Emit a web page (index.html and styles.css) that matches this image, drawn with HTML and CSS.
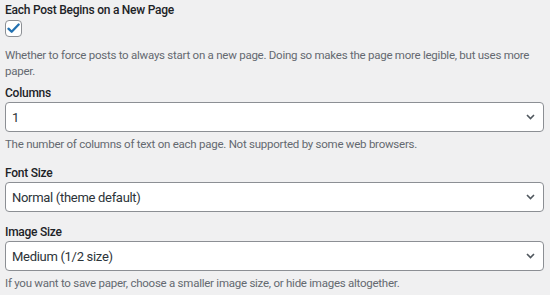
FILE: index.html
```html
<!DOCTYPE html>
<html>
<head>
<meta charset="utf-8">
<link rel="stylesheet" href="styles.css">
</head>
<body>
<div class="form">
  <div class="field first">
    <div class="label">Each Post Begins on a New Page</div>
    <div class="checkbox">
      <svg width="13" height="11" viewBox="0 0 14 12"><path d="M1.5 6.2 L5 9.6 L12.6 1.6" fill="none" stroke="#2271b1" stroke-width="2.5" stroke-linecap="round" stroke-linejoin="round"/></svg>
    </div>
    <p class="help">Whether to force posts to always start on a new page. Doing so makes the page more legible, but uses more paper.</p>
  </div>
  <div class="field with-help">
    <div class="label">Columns</div>
    <div class="select"><span>1</span><svg class="chev" width="9" height="6" viewBox="0 0 9 6"><path d="M1 1 L4.5 4.5 L8 1" fill="none" stroke="#50575e" stroke-width="1.6"/></svg></div>
    <p class="help">The number of columns of text on each page. Not supported by some web browsers.</p>
  </div>
  <div class="field">
    <div class="label">Font Size</div>
    <div class="select"><span>Normal (theme default)</span><svg class="chev" width="9" height="6" viewBox="0 0 9 6"><path d="M1 1 L4.5 4.5 L8 1" fill="none" stroke="#50575e" stroke-width="1.6"/></svg></div>
  </div>
  <div class="field">
    <div class="label">Image Size</div>
    <div class="select"><span>Medium (1/2 size)</span><svg class="chev" width="9" height="6" viewBox="0 0 9 6"><path d="M1 1 L4.5 4.5 L8 1" fill="none" stroke="#50575e" stroke-width="1.6"/></svg></div>
    <p class="help">If you want to save paper, choose a smaller image size, or hide images altogether.</p>
  </div>
</div>
</body>
</html>
```
FILE: styles.css
```css
html, body {
  margin: 0;
  padding: 0;
  background: #f0f0f1;
}
body {
  font-family: Roboto, "Noto Sans", sans-serif;
  color: #1d2327;
}
.form {
  display: flex;
  flex-direction: column;
  gap: 12px;
  padding: 2px 6px 0 5px;
}
.field {
  display: flex;
  flex-direction: column;
}
.first {
  margin-bottom: -6px;
}
.with-help {
  margin-bottom: 1px;
}
.label {
  font-size: 12px;
  font-weight: 500;
  line-height: 16px;
  letter-spacing: -0.25px;
  margin-bottom: 1px;
}
.checkbox {
  box-sizing: border-box;
  width: 17px;
  height: 17px;
  border: 1px solid #8c8f94;
  border-radius: 4px;
  background: #fff;
  display: flex;
  align-items: center;
  justify-content: center;
  margin-top: 1px;
  margin-bottom: 10px;
}
.help {
  margin: 0;
  font-size: 11.5px;
  line-height: 16px;
  letter-spacing: -0.25px;
  color: #646970;
}
.select + .help {
  margin-top: 4px;
}
.select {
  box-sizing: border-box;
  height: 30px;
  border: 1px solid #8c8f94;
  border-radius: 4px;
  background: #fff;
  display: flex;
  align-items: center;
  justify-content: space-between;
  padding: 0 8px 0 6px;
  font-size: 13px;
  letter-spacing: -0.3px;
  color: #2c3338;
}
.chev {
  display: block;
}
```
